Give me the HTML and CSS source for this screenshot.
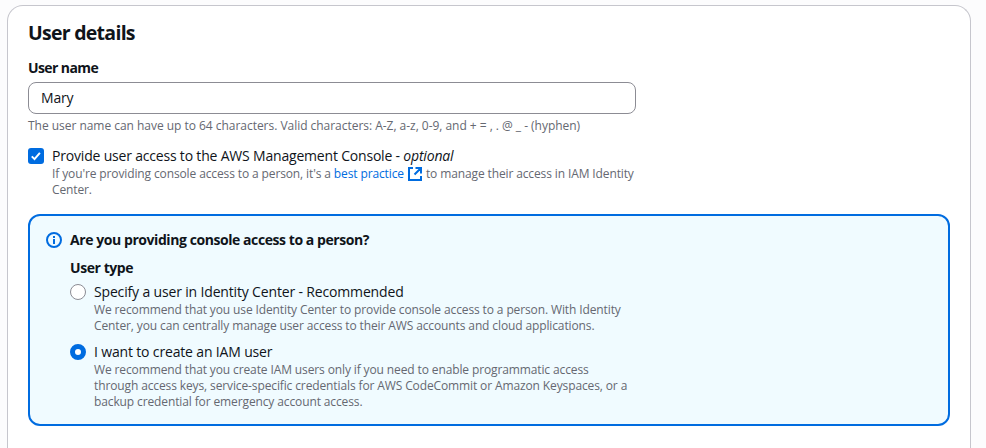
FILE: index.html
```
<!DOCTYPE html>
<html lang="en"><head><meta charset="utf-8"><title>User details</title><link rel="stylesheet" href="styles.css"></head>
<body>
<main class="panel">
<h1 class="title">User details</h1>
<label class="label" for="user">User name</label>
<input class="input" id="user" value="Mary">
<p class="hint constraint">The user name can have up to 64 characters. Valid characters: A-Z, a-z, 0-9, and + = , . @ _ - (hyphen)</p>
<div class="option access">
<span class="checkbox"><svg viewBox="0 0 16 16" width="16" height="16"><path d="M3.8 8.4l2.7 2.7 5.4-6.2" fill="none" stroke="#fff" stroke-width="2"/></svg></span>
<div><div class="name console">Provide user access to the AWS Management Console - <i>optional</i></div>
<p class="hint"><span class="line">If you're providing console access to a person, it's a <a class="link">best practice <svg class="ext" viewBox="0 0 16 16" width="16" height="16"><path d="M6 2H2v12h12v-4M8.5 2H14v5.5M14 2L7.5 8.5" fill="none" stroke="currentColor" stroke-width="2"/></svg></a> to manage their access in IAM Identity</span><span class="line">Center.</span></p></div>
</div>
<section class="alert">
<svg class="info" viewBox="0 0 16 16" width="16" height="16"><g fill="none" stroke="currentColor" stroke-width="2"><circle cx="8" cy="8" r="7"/><path d="M8 12V7M8 4v2"/></g></svg>
<div class="body">
<h2 class="question">Are you providing console access to a person?</h2>
<h3 class="type">User type</h3>
<div class="option"><span class="radio"></span><div><div class="name">Specify a user in Identity Center - Recommended</div>
<p class="hint"><span class="line">We recommend that you use Identity Center to provide console access to a person. With Identity</span><span class="line">Center, you can centrally manage user access to their AWS accounts and cloud applications.</span></p></div></div>
<div class="option second"><span class="radio on"></span><div><div class="name">I want to create an IAM user</div>
<p class="hint"><span class="line">We recommend that you create IAM users only if you need to enable programmatic access</span><span class="line">through access keys, service-specific credentials for AWS CodeCommit or Amazon Keyspaces, or a</span><span class="line">backup credential for emergency account access.</span></p></div></div>
</div></section>
</main>
</body></html>
```
FILE: styles.css
```
*{box-sizing:border-box}
body{margin:0;background:#fcfcfd;font:14px/20px "Open Sans","Noto Sans",sans-serif;color:#0f141a;display:flow-root}
h1,h2,h3,p{margin:0}
.panel{margin:5px 15px 0 7px;height:443px;background:#fff;border:1px solid #c6c6cd;border-bottom:0;border-radius:16px 16px 0 0;padding:15px 20px 0}
.title{font-size:19.5px;line-height:24px;font-weight:700;letter-spacing:-.73px}
.label{display:block;margin-top:13px;font-weight:700;letter-spacing:-.6px}
.input{display:block;margin-top:4px;width:608px;height:32px;border:1px solid #8c8c94;border-radius:8px;padding:3px 12px 5px;font:inherit;letter-spacing:-.2px;color:inherit;background:#fff}
.hint{font-size:12px;line-height:16px;color:#656871;letter-spacing:-.12px}
.constraint{margin-top:4px;letter-spacing:-.03px}
.line{display:block;white-space:nowrap;height:16px}
.option{display:flex;gap:8px}
.access{margin-top:12px}
.checkbox{width:16px;height:16px;margin-top:2px;border-radius:3px;background:#006ce0;flex:none}
.checkbox svg{display:block}
.name{white-space:nowrap;letter-spacing:-.16px}
.console{letter-spacing:-.19px}
.link{color:#006ce0}
.ext{vertical-align:-4px}
.alert{display:flex;gap:8px;margin-top:16px;width:922px;height:212px;border:2px solid #006ce0;border-radius:12px;background:#f0fbff;padding:14px 16px}
.info{color:#006ce0;margin-top:2px;flex:none}
.question,.type{font-size:14px;line-height:20px;font-weight:700;letter-spacing:-.43px}
.type{margin-top:8px;margin-bottom:4px}
.radio{width:16px;height:16px;margin-top:2px;border:1px solid #8c8c94;border-radius:50%;background:#fff;flex:none}
.radio.on{border:5px solid #006ce0}
.second{margin-top:8px}
```
